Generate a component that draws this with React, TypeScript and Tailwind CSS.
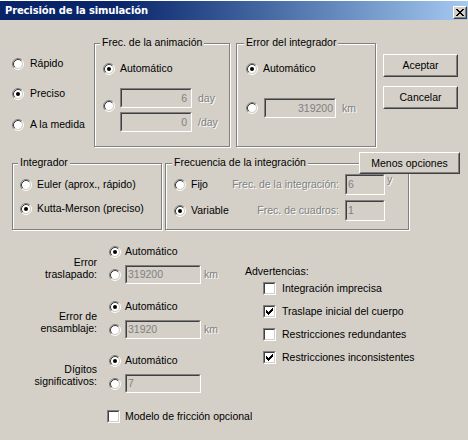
import React from "react";

const dis = "text-[#808080] [text-shadow:1px_1px_0_#fff]";

function Radio({ checked }: { checked?: boolean }) {
  return (
    <svg width="12" height="12" viewBox="0 0 12 12" className="block shrink-0">
      <circle cx="6" cy="6" r="4" fill="#fff" />
      <path d="M2.11 9.89A5.5 5.5 0 0 1 9.89 2.11" stroke="#808080" fill="none" />
      <path d="M9.89 2.11A5.5 5.5 0 0 1 2.11 9.89" stroke="#ffffff" fill="none" />
      <path d="M2.82 9.18A4.5 4.5 0 0 1 9.18 2.82" stroke="#404040" fill="none" />
      <path d="M9.18 2.82A4.5 4.5 0 0 1 2.82 9.18" stroke="#d4d0c8" fill="none" />
      {checked && <circle cx="6" cy="6" r="2" fill="#000" />}
    </svg>
  );
}

function Check({ checked }: { checked?: boolean }) {
  return (
    <div className="w-[13px] h-[13px] shrink-0 border border-t-[#808080] border-l-[#808080] border-b-white border-r-white">
      <div className="w-full h-full border border-t-[#404040] border-l-[#404040] border-b-[#d4d0c8] border-r-[#d4d0c8] bg-white">
        {checked && (
          <svg width="9" height="9" viewBox="0 0 9 9" shapeRendering="crispEdges" className="block">
            <rect x="7" y="1" width="1" height="1" fill="#000" />
            <rect x="6" y="2" width="2" height="1" fill="#000" />
            <rect x="1" y="3" width="1" height="1" fill="#000" />
            <rect x="5" y="3" width="3" height="1" fill="#000" />
            <rect x="1" y="4" width="2" height="1" fill="#000" />
            <rect x="4" y="4" width="3" height="1" fill="#000" />
            <rect x="1" y="5" width="5" height="1" fill="#000" />
            <rect x="2" y="6" width="3" height="1" fill="#000" />
            <rect x="3" y="7" width="1" height="1" fill="#000" />
          </svg>
        )}
      </div>
    </div>
  );
}

function Field({ className, inner, children }: { className: string; inner: string; children: React.ReactNode }) {
  return (
    <div className={`shrink-0 border border-t-[#808080] border-l-[#808080] border-b-white border-r-white ${className}`}>
      <div className={`w-full h-full flex items-center border border-t-[#404040] border-l-[#404040] border-b-[#d4d0c8] border-r-[#d4d0c8] bg-[#d4d0c8] text-[#808080] ${inner}`}>
        {children}
      </div>
    </div>
  );
}

function Button({ className, children }: { className: string; children: React.ReactNode }) {
  return (
    <div className={`border border-t-white border-l-white border-b-[#404040] border-r-[#404040] bg-[#d4d0c8] ${className}`}>
      <div className="w-full h-full flex items-center justify-center border border-t-[#d4d0c8] border-l-[#d4d0c8] border-b-[#808080] border-r-[#808080]">
        {children}
      </div>
    </div>
  );
}

function Group({
  className,
  legend,
  legendClass,
  children,
}: {
  className: string;
  legend: string;
  legendClass: string;
  children: React.ReactNode;
}) {
  return (
    <div className={`relative shrink-0 border border-[#808080] shadow-[inset_1px_1px_0_#fff,1px_1px_0_#fff] ${className}`}>
      <span className={`absolute -top-[8px] bg-[#d4d0c8] px-[2px] leading-[13px] whitespace-nowrap ${legendClass}`}>{legend}</span>
      {children}
    </div>
  );
}

function Row({ children, className = "" }: { children: React.ReactNode; className?: string }) {
  return <div className={`flex items-center h-[13px] whitespace-nowrap ${className}`}>{children}</div>;
}

export default function App() {
  return (
    <div className="relative w-[468px] h-[440px] overflow-hidden bg-[#d4d0c8] text-black text-[10.5px] leading-[13px] font-['Liberation_Sans',Arial,sans-serif]">
      <div className="h-[1px] bg-white" />
      <div className="h-[19px] flex justify-between bg-linear-to-r from-[#0a246a] via-[#0a246a] via-[25%] to-[#a6caf0]">
        <div className="pl-[5px] pt-[4px] text-white font-bold text-[10px] leading-[12px] tracking-[-0.15px] font-['DejaVu_Sans',sans-serif] whitespace-nowrap">
          Precisión de la simulación
        </div>
        <Button className="mt-[5px] mr-[1px] w-[14px] h-[13px]">
          <svg width="8" height="7" viewBox="0 0 8 7" shapeRendering="crispEdges" className="block">
            <path d="M0 0h2v1h-2zM6 0h2v1h-2zM1 1h2v1h-2zM5 1h2v1h-2zM2 2h4v1h-4zM3 3h2v1h-2zM2 4h4v1h-4zM1 5h2v1h-2zM5 5h2v1h-2zM0 6h2v1h-2zM6 6h2v1h-2z" fill="#000" />
          </svg>
        </Button>
      </div>

      {/* Section 1 */}
      <div className="flex mt-[23px]">
        <div className="ml-[12px] w-[82px] shrink-0 flex flex-col">
          <Row className="mt-[14px] gap-[6px]">
            <Radio />
            Rápido
          </Row>
          <Row className="mt-[17px] gap-[6px]">
            <Radio checked />
            Preciso
          </Row>
          <Row className="mt-[18px] gap-[6px]">
            <Radio />A la medida
          </Row>
        </div>

        <Group className="w-[136px] h-[104px]" legend="Frec. de la animación" legendClass="left-[5px]">
          <div className="pl-[8px] pt-[18px]">
            <Row className="gap-[5px]">
              <Radio checked />
              Automático
            </Row>
            <div className="flex mt-[13px]">
              <div className="mt-[12px]">
                <Radio />
              </div>
              <div className="ml-[5px] flex flex-col gap-[4px]">
                <div className="flex items-center">
                  <Field className="w-[72px] h-[20px]" inner="justify-end pr-[3px]">6</Field>
                  <span className={`ml-[6px] ${dis}`}>day</span>
                </div>
                <div className="flex items-center">
                  <Field className="w-[72px] h-[20px]" inner="justify-end pr-[3px]">0</Field>
                  <span className={`ml-[6px] ${dis}`}>/day</span>
                </div>
              </div>
            </div>
          </div>
        </Group>

        <Group className="ml-[6px] w-[140px] h-[104px]" legend="Error del integrador" legendClass="left-[7px]">
          <div className="pl-[9px] pt-[18px]">
            <Row className="gap-[5px]">
              <Radio checked />
              Automático
            </Row>
            <div className="mt-[23px] flex items-center h-[20px]">
              <Radio />
              <Field className="ml-[6px] w-[72px] h-[20px]" inner="justify-end pr-[1px]">319200</Field>
              <span className={`ml-[6px] ${dis}`}>km</span>
            </div>
          </div>
        </Group>

        <div className="ml-[7px] flex flex-col">
          <Button className="mt-[11px] w-[75px] h-[23px]">Aceptar</Button>
          <Button className="mt-[9px] w-[75px] h-[23px]">Cancelar</Button>
        </div>
      </div>

      {/* Section 2 */}
      <div className="flex mt-[16px]">
        <Group className="ml-[12px] w-[150px] h-[67px]" legend="Integrador" legendClass="left-[5px]">
          <div className="pl-[7px] pt-[14px]">
            <Row className="gap-[5px]">
              <Radio />
              Euler (aprox., rápido)
            </Row>
            <Row className="mt-[11px] gap-[5px]">
              <Radio checked />
              Kutta-Merson (preciso)
            </Row>
          </div>
        </Group>

        <Group className="ml-[3px] w-[244px] h-[67px]" legend="Frecuencia de la integración" legendClass="left-[6px]">
          <div className="pl-[8px] pt-[10px]">
            <div className="flex items-center h-[21px] whitespace-nowrap">
              <Radio />
              <span className="ml-[5px] w-[40px]">Fijo</span>
              <span className={`w-[108px] text-right ${dis}`}>Frec. de la integración:</span>
              <Field className="ml-[6px] w-[40px] h-[21px]" inner="pl-[1px]">6</Field>
              <span className={`ml-[2px] self-start -mt-[1px] ${dis}`}>y</span>
            </div>
            <div className="mt-[5px] flex items-center h-[21px] whitespace-nowrap">
              <Radio checked />
              <span className="ml-[5px] w-[40px]">Variable</span>
              <span className={`w-[108px] text-right ${dis}`}>Frec. de cuadros:</span>
              <Field className="ml-[6px] w-[40px] h-[21px]" inner="pl-[1px]">1</Field>
            </div>
          </div>
        </Group>
      </div>

      <Button className="absolute left-[359px] top-[152px] w-[101px] h-[22px]">Menos opciones</Button>

      {/* Section 3 */}
      <div className="flex">
        <div className="w-[245px] shrink-0 flex flex-col">
          <div className="mt-[15px] flex">
            <div className="w-[97px] text-right leading-[12px] pt-[11px]">
              Error
              <br />
              traslapado:
            </div>
            <div className="ml-[12px] flex flex-col">
              <Row className="gap-[4px]">
                <Radio checked />
                Automático
              </Row>
              <div className="mt-[7px] flex items-center">
                <Radio />
                <Field className="ml-[4px] w-[76px] h-[19px]" inner="pl-[1px]">319200</Field>
                <span className={`ml-[3px] ${dis}`}>km</span>
              </div>
            </div>
          </div>

          <div className="mt-[16px] flex">
            <div className="w-[97px] text-right leading-[12px] pt-[10px]">
              Error de
              <br />
              ensamblaje:
            </div>
            <div className="ml-[12px] flex flex-col">
              <Row className="gap-[4px]">
                <Radio checked />
                Automático
              </Row>
              <div className="mt-[7px] flex items-center">
                <Radio />
                <Field className="ml-[4px] w-[76px] h-[19px]" inner="pl-[1px]">31920</Field>
                <span className={`ml-[3px] ${dis}`}>km</span>
              </div>
            </div>
          </div>

          <div className="mt-[15px] flex">
            <div className="w-[97px] text-right leading-[12px] pt-[9px]">
              Dígitos
              <br />
              significativos:
            </div>
            <div className="ml-[12px] flex flex-col">
              <Row className="gap-[4px]">
                <Radio checked />
                Automático
              </Row>
              <div className="mt-[7px] flex items-center">
                <Radio />
                <Field className="ml-[4px] w-[76px] h-[19px]" inner="pl-[1px]">7</Field>
              </div>
            </div>
          </div>

          <div className="mt-[17px] pl-[107px] flex items-center gap-[5px]">
            <Check />
            <span className="shrink-0 w-[127px] overflow-hidden whitespace-nowrap">Modelo de fricción opcional</span>
          </div>
        </div>

        <div className="flex flex-col pt-[35px]">
          <div className="whitespace-nowrap">Advertencias:</div>
          <div className="pl-[18px] mt-[4px] flex flex-col gap-[10px]">
            <Row className="gap-[6px]">
              <Check />
              Integración imprecisa
            </Row>
            <Row className="gap-[6px]">
              <Check checked />
              Traslape inicial del cuerpo
            </Row>
            <Row className="gap-[6px]">
              <Check />
              Restricciones redundantes
            </Row>
            <Row className="gap-[6px]">
              <Check checked />
              Restricciones inconsistentes
            </Row>
          </div>
        </div>
      </div>
    </div>
  );
}
